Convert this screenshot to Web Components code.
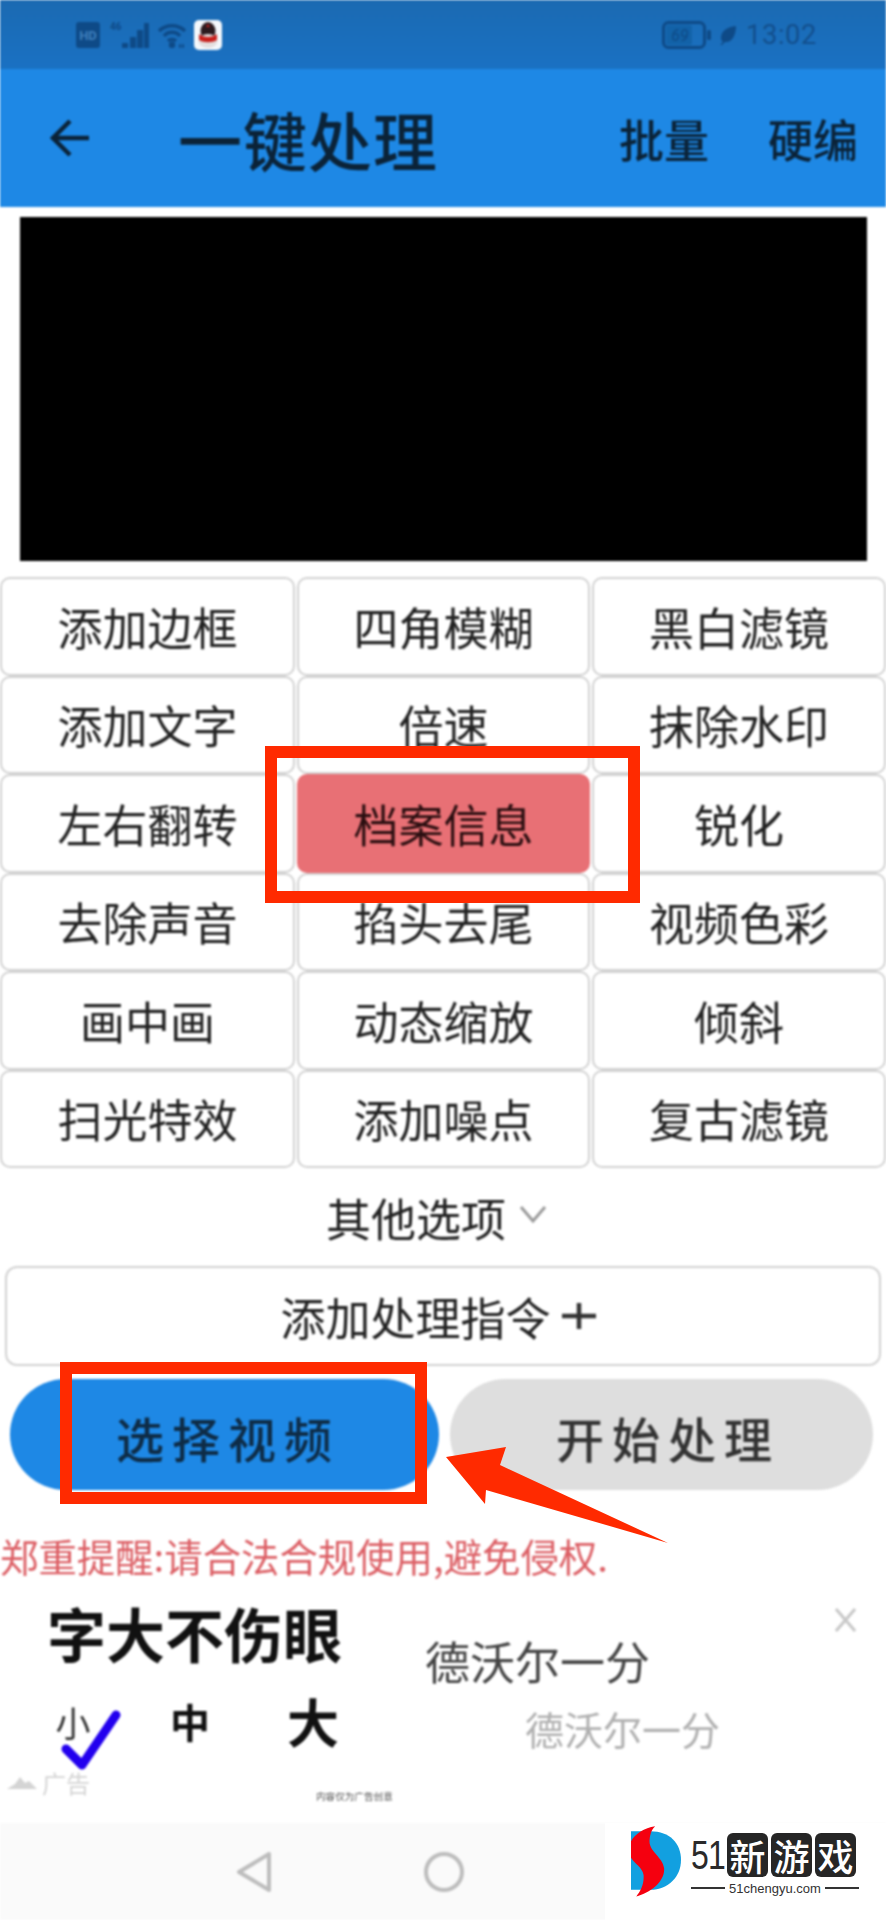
<!DOCTYPE html>
<html lang="zh">
<head>
<meta charset="utf-8">
<title>一键处理</title>
<style>
  html, body { margin: 0; padding: 0; background: #fff; }
</style>
</head>
<body>
<app-page>
  <status-bar></status-bar>
  <app-bar></app-bar>
  <video-preview></video-preview>
  <effect-grid>
    <effect-button>添加边框</effect-button>
    <effect-button>四角模糊</effect-button>
    <effect-button>黑白滤镜</effect-button>
    <effect-button>添加文字</effect-button>
    <effect-button>倍速</effect-button>
    <effect-button>抹除水印</effect-button>
    <effect-button>左右翻转</effect-button>
    <effect-button active>档案信息</effect-button>
    <effect-button>锐化</effect-button>
    <effect-button>去除声音</effect-button>
    <effect-button>掐头去尾</effect-button>
    <effect-button>视频色彩</effect-button>
    <effect-button>画中画</effect-button>
    <effect-button>动态缩放</effect-button>
    <effect-button>倾斜</effect-button>
    <effect-button>扫光特效</effect-button>
    <effect-button>添加噪点</effect-button>
    <effect-button>复古滤镜</effect-button>
  </effect-grid>
  <more-options></more-options>
  <add-command></add-command>
  <action-row>
    <action-button primary>选择视频</action-button>
    <action-button>开始处理</action-button>
  </action-row>
  <legal-notice>郑重提醒:请合法合规使用,避免侵权.</legal-notice>
  <ad-card></ad-card>
  <nav-bar></nav-bar>
  <annotation-layer slot="overlay"></annotation-layer>
  <site-watermark slot="overlay"></site-watermark>
</app-page>

<script>
const CJK = '"Noto Sans CJK SC", "Noto Sans", sans-serif';

class AppPage extends HTMLElement {
  shadowRoot = this.attachShadow({ mode: 'open' });

  connectedCallback () {
    this.shadowRoot.innerHTML = `
    <style>
      :host {
        display: block;
        position: relative;
        width: 886px;
        height: 1920px;
        overflow: hidden;
        background: #fff;
        font-family: ${CJK};
        color: #333;
      }
      /* the reference is an upscaled phone shot, everything is a bit soft */
      .soft {
        display: flex;
        flex-direction: column;
        height: 100%;
        filter: blur(0.8px);
      }
    </style>
    <div class="soft"><slot></slot></div>
    <slot name="overlay"></slot>`;
  }
}

class StatusBar extends HTMLElement {
  shadowRoot = this.attachShadow({ mode: 'open' });

  connectedCallback () {
    this.shadowRoot.innerHTML = `
    <style>
      :host {
        display: flex;
        flex: none;
        align-items: center;
        justify-content: space-between;
        height: 69px;
        padding: 0 69px 0 76px;
        box-sizing: border-box;
        background: linear-gradient(to bottom, #1b6ab2, #1a71c3);
        color: #0e4a87;
      }
      .group { display: flex; align-items: center; }
      svg { display: block; }
      .hd { margin-right: 10px; }
      .signal { margin-right: 8px; }
      .wifi { margin-right: 8px; }
      .leaf { margin: 0 9px 0 7px; }
      .time { font: 400 27.5px/1 Roboto, sans-serif; letter-spacing: 0.5px; color: #124f8d; }
    </style>
    <div class="group">
      <svg class="hd" width="24" height="26" viewBox="0 0 24 26">
        <rect width="24" height="26" rx="3" fill="#0e4a87"/>
        <text x="12" y="18" font-size="13" font-weight="700" text-anchor="middle" font-family="Roboto, sans-serif" fill="#3f7fbd">HD</text>
      </svg>
      <svg class="signal" width="40" height="28" viewBox="0 0 40 28" fill="#0e4a87">
        <text x="0" y="9" font-size="10" font-weight="700" font-family="Roboto, sans-serif">46</text>
        <path d="M12 22h6v5h-6zM20 16h6v11h-6zM27 9h6v18h-6zM34 2h5v25h-5z"/>
      </svg>
      <svg class="wifi" width="28" height="26" viewBox="0 0 28 26" fill="none" stroke="#0e4a87" stroke-width="3.5">
        <path d="M1 9 C8 2 20 2 27 9"/>
        <path d="M6 14 C10 9 18 9 22 14"/>
        <path d="M10 19 C12 17 16 17 18 19"/>
        <circle cx="14" cy="23" r="1.5" fill="#0e4a87"/>
        <path d="M21 24h6" stroke-dasharray="2 1"/>
      </svg>
      <svg width="28" height="30" viewBox="0 0 28 30">
        <rect width="28" height="30" rx="5" fill="#f4f8fc"/>
        <ellipse cx="14" cy="11" rx="7.5" ry="9" fill="#2b1a1e"/>
        <ellipse cx="14" cy="21" rx="9.5" ry="7" fill="#e4dfdf"/>
        <path d="M5 14 C10 18 18 18 23 14 L23 20 C18 23 10 23 5 20Z" fill="#c8201c"/>
        <path d="M14 4 l2 3 h-4z" fill="#c8201c"/>
      </svg>
    </div>
    <div class="group">
      <svg width="50" height="28" viewBox="0 0 50 28">
        <rect x="1.5" y="1.5" width="41" height="25" rx="5" fill="none" stroke="#0e4a87" stroke-width="3"/>
        <rect x="4" y="4" width="26" height="20" rx="2" fill="#1262a8"/>
        <text x="18" y="20" font-size="16" font-style="italic" text-anchor="middle" font-family="Roboto, sans-serif" fill="#0e4a87">69</text>
        <rect x="45" y="9" width="4" height="10" rx="1.5" fill="#0e4a87"/>
      </svg>
      <svg class="leaf" width="18" height="20" viewBox="0 0 18 20">
        <path d="M17 1 C8 2 2 6 2 13 C2 15 3 16 4 17 L1 20 L3 20 L6 17 C13 18 17 10 17 1Z" fill="#0e4a87"/>
      </svg>
      <span class="time">13:02</span>
    </div>`;
  }
}

class AppBar extends HTMLElement {
  shadowRoot = this.attachShadow({ mode: 'open' });

  connectedCallback () {
    this.shadowRoot.innerHTML = `
    <style>
      :host {
        display: flex;
        flex: none;
        align-items: center;
        height: 138px;
        padding: 0 28px 0 50px;
        box-sizing: border-box;
        background: #1e88e5;
        color: #0b2338;
      }
      svg { display: block; flex: none; margin-right: 89px; }
      .title { flex: 1; font-size: 64px; line-height: 1; font-weight: 500; letter-spacing: 1px; }
      .actions { display: flex; gap: 59px; font-size: 45px; line-height: 1; font-weight: 500; }
    </style>
    <svg width="39" height="38" viewBox="0 0 39 38" fill="none" stroke="#0b2338" stroke-width="4.5">
      <path d="M39 19H4"/>
      <path d="M20 2 L3 19 L20 36"/>
    </svg>
    <div class="title">一键处理</div>
    <div class="actions"><span>批量</span><span>硬编</span></div>`;
  }
}

class VideoPreview extends HTMLElement {
  shadowRoot = this.attachShadow({ mode: 'open' });

  connectedCallback () {
    this.shadowRoot.innerHTML = `
    <style>
      :host {
        display: block;
        flex: none;
        height: 344px;
        margin: 10px 19px 0 20px;
        background: #000;
      }
    </style>`;
  }
}

class EffectGrid extends HTMLElement {
  shadowRoot = this.attachShadow({ mode: 'open' });

  connectedCallback () {
    this.shadowRoot.innerHTML = `
    <style>
      :host {
        display: grid;
        flex: none;
        grid-template-columns: 295px 293px 294px;
        grid-auto-rows: 98.5px;
        column-gap: 2px;
        margin-top: 16px;
      }
    </style>
    <slot></slot>`;
  }
}

class EffectButton extends HTMLElement {
  shadowRoot = this.attachShadow({ mode: 'open' });

  connectedCallback () {
    this.shadowRoot.innerHTML = `
    <style>
      :host {
        display: flex;
        align-items: center;
        justify-content: center;
        box-sizing: border-box;
        border: 2px solid #d2d2d2;
        border-radius: 10px;
        background: #fff;
        font-size: 45px;
        line-height: 1;
        color: #222;
      }
      :host([active]) {
        background: #e87075;
        border-color: #e87075;
        color: #2a0e10;
      }
    </style>
    <slot></slot>`;
  }
}

class MoreOptions extends HTMLElement {
  shadowRoot = this.attachShadow({ mode: 'open' });

  connectedCallback () {
    this.shadowRoot.innerHTML = `
    <style>
      :host {
        display: flex;
        flex: none;
        align-items: center;
        justify-content: center;
        gap: 13px;
        height: 98px;
        padding-right: 13px;
        box-sizing: border-box;
        font-size: 45px;
        line-height: 1;
        color: #222;
      }
      svg { display: block; margin-top: -6px; }
    </style>
    <span>其他选项</span>
    <svg width="28" height="18" viewBox="0 0 28 18" fill="none" stroke="#9a9a9a" stroke-width="3">
      <path d="M2 2 L14 16 L26 2"/>
    </svg>`;
  }
}

class AddCommand extends HTMLElement {
  shadowRoot = this.attachShadow({ mode: 'open' });

  connectedCallback () {
    this.shadowRoot.innerHTML = `
    <style>
      :host {
        display: flex;
        flex: none;
        align-items: center;
        justify-content: center;
        gap: 11px;
        height: 100px;
        margin: 0 5px;
        padding-right: 10px;
        box-sizing: border-box;
        border: 2px solid #d2d2d2;
        border-radius: 12px;
        font-size: 45px;
        line-height: 1;
        color: #222;
      }
      svg { display: block; }
    </style>
    <span>添加处理指令</span>
    <svg width="34" height="26" viewBox="0 0 34 26" stroke="#333" stroke-width="4.5">
      <path d="M0 13H34M17 0V26"/>
    </svg>`;
  }
}

class ActionRow extends HTMLElement {
  shadowRoot = this.attachShadow({ mode: 'open' });

  connectedCallback () {
    this.shadowRoot.innerHTML = `
    <style>
      :host {
        display: grid;
        flex: none;
        grid-template-columns: 429px 423px;
        gap: 11px;
        height: 111px;
        margin-top: 13px;
        padding-left: 10px;
      }
    </style>
    <slot></slot>`;
  }
}

class ActionButton extends HTMLElement {
  shadowRoot = this.attachShadow({ mode: 'open' });

  connectedCallback () {
    this.shadowRoot.innerHTML = `
    <style>
      :host {
        display: flex;
        align-items: center;
        justify-content: center;
        box-sizing: border-box;
        padding: 5px 0 0 13px;
        border-radius: 56px;
        background: #dedede;
        font-size: 48px;
        line-height: 1;
        font-weight: 500;
        letter-spacing: 8px;
        color: #333;
      }
      :host([primary]) {
        background: #1e88e5;
        color: #0e2c47;
        padding-left: 7px;
      }
    </style>
    <slot></slot>`;
  }
}

class LegalNotice extends HTMLElement {
  shadowRoot = this.attachShadow({ mode: 'open' });

  connectedCallback () {
    this.shadowRoot.innerHTML = `
    <style>
      :host {
        display: block;
        flex: none;
        height: 44px;
        margin-top: 43px;
        font-size: 38.4px;
        line-height: 44px;
        white-space: nowrap;
        color: #dc5f65;
      }
    </style>
    <slot></slot>`;
  }
}

class AdCard extends HTMLElement {
  shadowRoot = this.attachShadow({ mode: 'open' });

  connectedCallback () {
    this.shadowRoot.innerHTML = `
    <style>
      :host {
        display: block;
        position: relative;
        flex: 1;
        margin-top: 13px;
      }
      .top { display: flex; }
      .pitch { flex: none; width: 378px; padding: 11px 0 0 47px; }
      .headline { font-size: 59px; line-height: 64px; font-weight: 700; color: #111; white-space: nowrap; }
      .sizes { display: flex; align-items: center; height: 56px; margin-top: 28px; color: #111; }
      .sizes span { flex: none; text-align: center; line-height: 1; }
      .small { position: relative; width: 42px; margin-left: 5px; font-size: 35px; color: #333; }
      .medium { width: 40px; margin-left: 76px; font-size: 40px; font-weight: 700; }
      .large { width: 52px; margin-left: 77px; font-size: 52px; font-weight: 700; }
      .names { padding-top: 46px; white-space: nowrap; }
      .name { font-size: 45px; line-height: 50px; color: #444; }
      .sub { margin: 20px 0 0 100px; font-size: 39px; line-height: 44px; color: #b0b0b0; }
      .foot { display: flex; margin-top: 18px; padding-left: 7px; }
      .tag { display: flex; align-items: center; gap: 5px; width: 309px; height: 30px; font-size: 24px; line-height: 1; color: #d4d4d4; }
      .tag svg { display: block; }
      .caption { margin-top: 22px; font-size: 9.6px; line-height: 12px; color: #555; white-space: nowrap; }
      .close { position: absolute; top: 18px; right: 30px; }
      .tick { position: absolute; left: 6px; top: 5px; }
    </style>
    <div class="top">
      <div class="pitch">
        <div class="headline">字大不伤眼</div>
        <div class="sizes">
          <span class="small">小
            <svg class="tick" width="68" height="66" viewBox="0 0 68 66" fill="none" stroke="#2200ee" stroke-width="9" stroke-linejoin="round" stroke-linecap="round">
              <path d="M8 40 L24 56 L58 6"/>
            </svg>
          </span>
          <span class="medium">中</span>
          <span class="large">大</span>
        </div>
      </div>
      <div class="names">
        <div class="name">德沃尔一分</div>
        <div class="sub">德沃尔一分</div>
      </div>
    </div>
    <div class="foot">
      <div class="tag">
        <svg width="30" height="14" viewBox="0 0 30 14" fill="#d4d4d4">
          <path d="M0 13 L8 8 L13 1 L18 7 L22 5 L30 13Z"/>
        </svg>
        <span>广告</span>
      </div>
      <div class="caption">内容仅为广告创意</div>
    </div>
    <svg class="close" width="21" height="24" viewBox="0 0 21 24" fill="none" stroke="#c8c8c8" stroke-width="3">
      <path d="M1 1 L20 23M20 1 L1 23"/>
    </svg>`;
  }
}

class NavBar extends HTMLElement {
  shadowRoot = this.attachShadow({ mode: 'open' });

  connectedCallback () {
    this.shadowRoot.innerHTML = `
    <style>
      :host {
        display: flex;
        flex: none;
        align-items: center;
        gap: 153px;
        height: 97px;
        padding-left: 237px;
        box-sizing: border-box;
        background: #fafafa;
      }
      svg { display: block; }
    </style>
    <svg width="34" height="40" viewBox="0 0 34 40" fill="none" stroke="#bdbdbd" stroke-width="4" stroke-linejoin="round">
      <path d="M32 2 V38 L2 20Z"/>
    </svg>
    <svg width="40" height="40" viewBox="0 0 40 40" fill="none" stroke="#bdbdbd" stroke-width="4">
      <circle cx="20" cy="20" r="18"/>
    </svg>`;
  }
}

class AnnotationLayer extends HTMLElement {
  shadowRoot = this.attachShadow({ mode: 'open' });

  connectedCallback () {
    this.shadowRoot.innerHTML = `
    <style>
      :host { position: absolute; inset: 0; pointer-events: none; }
      svg { display: block; }
    </style>
    <svg width="886" height="1920" viewBox="0 0 886 1920">
      <g fill="none" stroke="#ff2a00" stroke-width="12">
        <rect x="271" y="752" width="363" height="145"/>
        <rect x="66" y="1368" width="355" height="130"/>
      </g>
      <path d="M446 1457 L506 1447 L500 1465 L668 1543 L486 1490 L485 1504Z" fill="#ff2a00"/>
    </svg>`;
  }
}

class SiteWatermark extends HTMLElement {
  shadowRoot = this.attachShadow({ mode: 'open' });

  connectedCallback () {
    this.shadowRoot.innerHTML = `
    <style>
      :host {
        position: absolute;
        left: 605px;
        top: 1823px;
        width: 281px;
        height: 97px;
        box-sizing: border-box;
        padding: 3px 0 0 26px;
        display: flex;
        background: #fff;
      }
      .logo { display: block; flex: none; margin-right: 10px; }
      .brand { width: 168px; padding-top: 7px; }
      .head { display: flex; align-items: center; height: 44px; }
      .num {
        flex: none;
        width: 36px;
        font: 400 41px/1 "Liberation Sans", sans-serif;
        letter-spacing: -1px;
        color: #2a2a2a;
        transform: scaleX(0.78);
        transform-origin: left center;
      }
      .stamp {
        display: flex;
        align-items: center;
        justify-content: center;
        flex: none;
        width: 41px;
        height: 44px;
        margin-right: 3px;
        border-radius: 6px;
        background: #262626;
        color: #fff;
        font-size: 36px;
        line-height: 1;
        font-weight: 500;
      }
      .rule { display: flex; align-items: center; gap: 4px; margin-top: 3px; height: 16px; }
      .rule i { flex: 1; height: 2.5px; background: #333; }
      .rule span { font: 400 13px/1 "Liberation Sans", sans-serif; color: #333; }
    </style>
    <svg class="logo" width="50" height="71" viewBox="62 33 151 213">
      <path d="M62 48 H120 C180 48 213 85 213 135 C213 185 175 225 120 225 H62Z" fill="#12a0e0"/>
      <path d="M135 33 C90 40 55 70 55 105 C55 140 95 150 100 180 C102 210 90 230 78 245 C120 235 165 200 162 160 C158 125 115 110 118 75 C120 55 125 42 135 33Z" fill="#f5000f"/>
    </svg>
    <div class="brand">
      <div class="head">
        <span class="num">51</span>
        <span class="stamp">新</span>
        <span class="stamp">游</span>
        <span class="stamp">戏</span>
      </div>
      <div class="rule"><i></i><span>51chengyu.com</span><i></i></div>
    </div>`;
  }
}

customElements.define('app-page', AppPage);
customElements.define('status-bar', StatusBar);
customElements.define('app-bar', AppBar);
customElements.define('video-preview', VideoPreview);
customElements.define('effect-grid', EffectGrid);
customElements.define('effect-button', EffectButton);
customElements.define('more-options', MoreOptions);
customElements.define('add-command', AddCommand);
customElements.define('action-row', ActionRow);
customElements.define('action-button', ActionButton);
customElements.define('legal-notice', LegalNotice);
customElements.define('ad-card', AdCard);
customElements.define('nav-bar', NavBar);
customElements.define('annotation-layer', AnnotationLayer);
customElements.define('site-watermark', SiteWatermark);
</script>
</body>
</html>
